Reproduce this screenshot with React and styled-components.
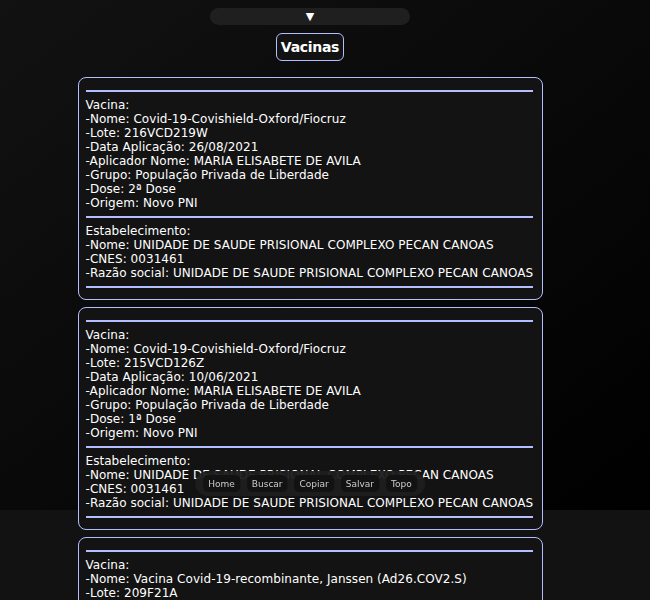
import React from "react";
import styled, { createGlobalStyle } from "styled-components";

const vacinas = [
  {
    nome: "Covid-19-Covishield-Oxford/Fiocruz",
    lote: "216VCD219W",
    data: "26/08/2021",
    aplicador: "MARIA ELISABETE DE AVILA",
    grupo: "População Privada de Liberdade",
    dose: "2ª Dose",
    origem: "Novo PNI",
    estNome: "UNIDADE DE SAUDE PRISIONAL COMPLEXO PECAN CANOAS",
    cnes: "0031461",
    razao: "UNIDADE DE SAUDE PRISIONAL COMPLEXO PECAN CANOAS",
  },
  {
    nome: "Covid-19-Covishield-Oxford/Fiocruz",
    lote: "215VCD126Z",
    data: "10/06/2021",
    aplicador: "MARIA ELISABETE DE AVILA",
    grupo: "População Privada de Liberdade",
    dose: "1ª Dose",
    origem: "Novo PNI",
    estNome: "UNIDADE DE SAUDE PRISIONAL COMPLEXO PECAN CANOAS",
    cnes: "0031461",
    razao: "UNIDADE DE SAUDE PRISIONAL COMPLEXO PECAN CANOAS",
  },
  {
    nome: "Vacina Covid-19-recombinante, Janssen (Ad26.COV2.S)",
    lote: "209F21A",
    data: "05/08/2021",
    aplicador: "MARIA ELISABETE DE AVILA",
    grupo: "População Privada de Liberdade",
    dose: "Dose",
    origem: "Novo PNI",
    estNome: "UNIDADE DE SAUDE PRISIONAL COMPLEXO PECAN CANOAS",
    cnes: "0031461",
    razao: "UNIDADE DE SAUDE PRISIONAL COMPLEXO PECAN CANOAS",
  },
];

export default function App() {
  return (
    <>
      <GlobalStyle />
      <Page>
        <Toggle>▼</Toggle>
        <Title>Vacinas</Title>
        <List>
          {vacinas.map((v, i) => (
            <Card key={i}>
              <Line />
              <Block>
                <p>Vacina:</p>
                <p>-Nome: {v.nome}</p>
                <p>-Lote: {v.lote}</p>
                <p>-Data Aplicação: {v.data}</p>
                <p>-Aplicador Nome: {v.aplicador}</p>
                <p>-Grupo: {v.grupo}</p>
                <p>-Dose: {v.dose}</p>
                <p>-Origem: {v.origem}</p>
              </Block>
              <Line />
              <Block>
                <p>Estabelecimento:</p>
                <p>-Nome: {v.estNome}</p>
                <p>-CNES: {v.cnes}</p>
                <p>-Razão social: {v.razao}</p>
              </Block>
              <Line />
            </Card>
          ))}
        </List>
      </Page>
      <NavBar>
        {["Home", "Buscar", "Copiar", "Salvar", "Topo"].map((b) => (
          <NavButton key={b}>{b}</NavButton>
        ))}
      </NavBar>
    </>
  );
}

const GlobalStyle = createGlobalStyle`
  body {
    margin: 0;
    background-color: #121212;
    background-image: linear-gradient(to bottom right, #121212, #000);
    background-repeat: no-repeat;
    background-size: 100% 85vh;
    color: #fff;
    font-family: "DejaVu Sans", sans-serif;
  }
`;

const Page = styled.div`
  display: flex;
  flex-direction: column;
  align-items: center;
  padding: 8px 30px 80px 0;
`;

const Toggle = styled.div`
  width: 200px;
  height: 17px;
  border-radius: 9px;
  background: #1f1f1f;
  color: #fff;
  font-size: 11px;
  line-height: 17px;
  text-align: center;
`;

const Title = styled.button`
  margin-top: 8px;
  height: 28px;
  padding: 0 4px;
  background: #121212;
  color: #fff;
  border: 1px solid #b4befe;
  border-radius: 6px;
  font-family: "DejaVu Sans", sans-serif;
  font-weight: bold;
  font-size: 14px;
  letter-spacing: -0.3px;
`;

const List = styled.div`
  margin-top: 16px;
  display: flex;
  flex-direction: column;
  gap: 7px;
`;

const Card = styled.div`
  width: 447px;
  padding: 12px 9px 11px 7px;
  background: #131313;
  border: 1px solid #b4befe;
  border-radius: 8px;
`;

const Line = styled.div`
  height: 2px;
  background: #b4befe;
`;

const Block = styled.div`
  padding: 6px 0;
  font-size: 12px;
  line-height: 14px;
  letter-spacing: 0.05px;
  white-space: nowrap;
  p {
    margin: 0;
  }
`;

const NavBar = styled.div`
  position: fixed;
  left: 310px;
  top: 471px;
  transform: translateX(-50%);
  display: flex;
  gap: 7px;
  padding: 4px 8px;
  background: rgba(30, 30, 30, 0.95);
  border-radius: 13px;
`;

const NavButton = styled.button`
  background: #121212;
  color: #ccc;
  border: none;
  border-radius: 5px;
  padding: 0 5px;
  height: 17px;
  font-family: "DejaVu Sans", sans-serif;
  font-size: 9px;
`;
